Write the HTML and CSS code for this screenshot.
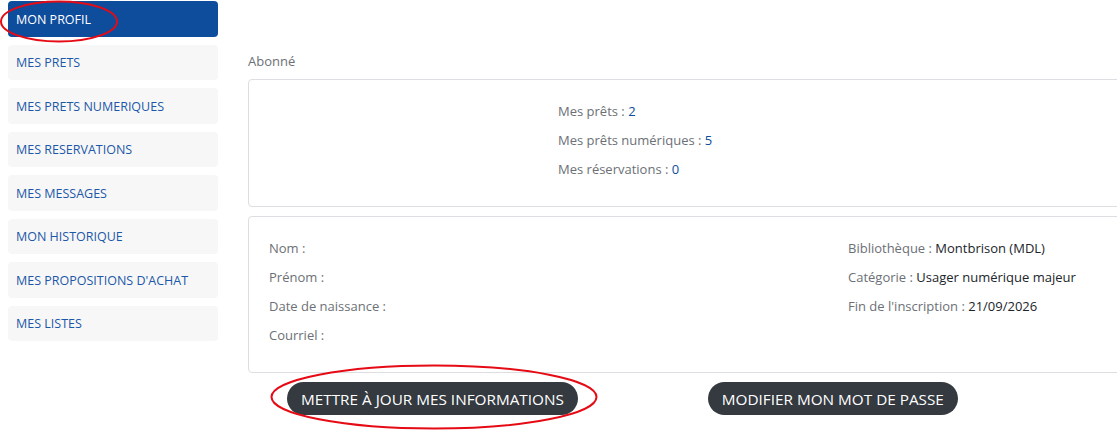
FILE: index.html
```html
<!DOCTYPE html>
<html>
<head>
    <meta charset="utf-8" />
    <meta name="viewport" content="width=device-width, initial-scale=1.0">
    <title>Mon compte</title>
    <link rel="stylesheet" href="styles.css">
</head>
<body>

    <div class="account">
        <nav class="menu">
            <a class="menu-item active">MON PROFIL</a>
            <a class="menu-item">MES PRETS</a>
            <a class="menu-item">MES PRETS NUMERIQUES</a>
            <a class="menu-item">MES RESERVATIONS</a>
            <a class="menu-item">MES MESSAGES</a>
            <a class="menu-item">MON HISTORIQUE</a>
            <a class="menu-item">MES PROPOSITIONS D'ACHAT</a>
            <a class="menu-item">MES LISTES</a>
        </nav>

        <main class="profile">
            <div class="profile-type">Abonné</div>

            <section class="card summary">
                <p>Mes prêts : <span class="count">2</span></p>
                <p>Mes prêts numériques : <span class="count">5</span></p>
                <p>Mes réservations : <span class="count">0</span></p>
            </section>

            <section class="card details">
                <div class="col">
                    <p>Nom :</p>
                    <p>Prénom :</p>
                    <p>Date de naissance :</p>
                    <p>Courriel :</p>
                </div>
                <div class="col">
                    <p>Bibliothèque : <span class="value">Montbrison (MDL)</span></p>
                    <p>Catégorie : <span class="value">Usager numérique majeur</span></p>
                    <p>Fin de l'inscription : <span class="value">21/09/2026</span></p>
                </div>
            </section>

            <div class="actions">
                <button class="btn">METTRE À JOUR MES INFORMATIONS</button>
                <button class="btn">MODIFIER MON MOT DE PASSE</button>
            </div>
        </main>
    </div>

    <!-- annotations -->
    <svg class="marks" width="1117" height="432" viewBox="0 0 1117 432">
        <ellipse cx="59" cy="21.5" rx="58" ry="20" />
        <ellipse cx="434" cy="397" rx="162.5" ry="31.5" />
    </svg>

</body>
</html>
```

FILE: styles.css
```css
html, body {
    --blue:      rgb(14, 76, 156);
    --link:      rgb(28, 88, 168);
    --tile:      rgb(247, 247, 247);
    --border:    rgb(222, 222, 226);
    --muted:     rgb(108, 112, 118);
    --text:      rgb(33, 37, 41);
    --dark:      rgb(52, 58, 64);

    font-family: "Open Sans", "Noto Sans", sans-serif;
    background-color: #fff;
    margin: 0;
    padding: 0;
    overflow: hidden;
}

.account {
    display: flex;
    gap: 30px;
    padding: 1px 0 0 8px;
    width: 1400px;
}

.menu {
    display: flex;
    flex-direction: column;
    gap: 8px;
    width: 210px;
    flex-shrink: 0;
}

.menu-item {
    display: flex;
    align-items: center;
    height: 35.5px;
    padding: 1px 8px 0 8px;
    box-sizing: border-box;
    font-size: 12.5px;
    color: var(--link);
    background-color: var(--tile);
    border-radius: 4px;
    text-decoration: none;
}

.menu-item.active {
    background-color: var(--blue);
    color: #fff;
}

.profile {
    width: 1150px;
    flex-shrink: 0;
    padding-top: 50px;
}

.profile-type {
    font-size: 13px;
    color: var(--muted);
    line-height: 20px;
    margin-bottom: 8px;
}

.card {
    border: 1px solid var(--border);
    border-radius: 4px;
    padding: 21px 0 18px 0;
    margin-bottom: 9px;
}

.card p {
    margin: 0 0 9px 0;
    font-size: 13px;
    line-height: 20px;
    color: var(--muted);
}

.summary {
    padding-left: 309px;
}

.summary .count {
    color: var(--blue);
}

.details {
    display: flex;
    padding-left: 20px;
}

.details .col {
    width: 579px;
    flex-shrink: 0;
}

.details .value {
    color: var(--text);
}

.actions {
    display: flex;
    gap: 130px;
    padding-left: 39px;
}

.btn {
    height: 33px;
    padding: 0 14px;
    font-family: inherit;
    font-size: 15.3px;
    color: #fff;
    background-color: var(--dark);
    border: none;
    border-radius: 17px;
}

.marks {
    position: absolute;
    left: 0;
    top: 0;
    pointer-events: none;
}

.marks ellipse {
    fill: none;
    stroke: rgb(230, 10, 20);
    stroke-width: 2;
}
```
